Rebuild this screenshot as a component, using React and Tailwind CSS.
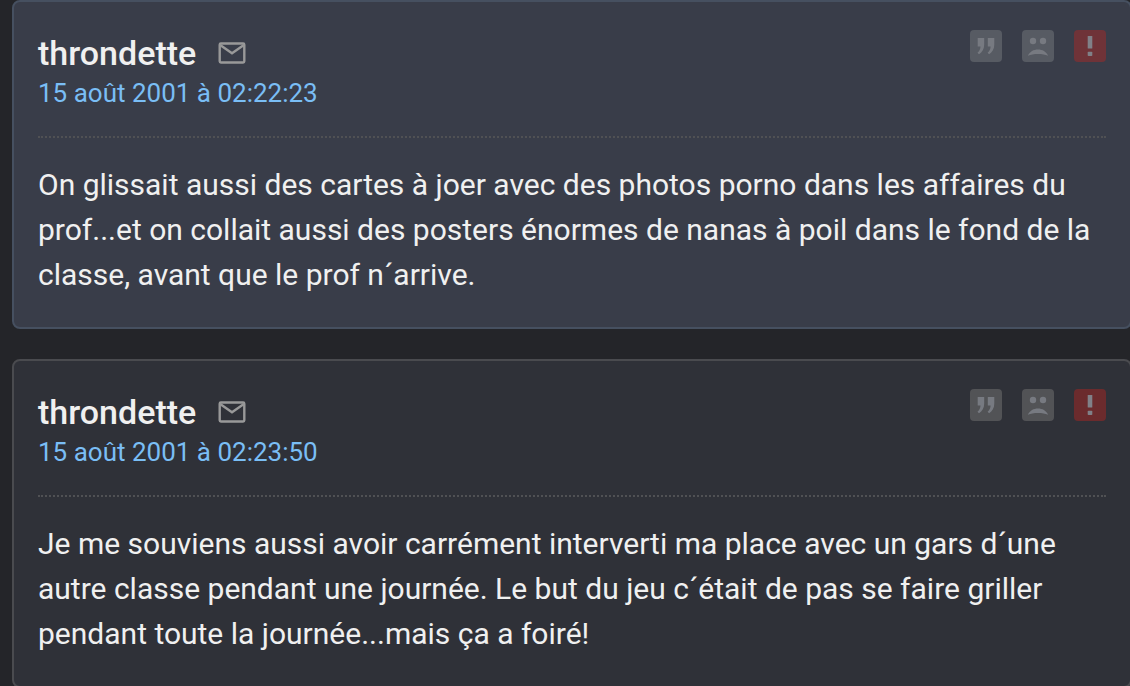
const posts = [
  {
    id: 1,
    author: "throndette",
    date: "15 août 2001 à 02:22:23",
    text: "On glissait aussi des cartes à joer avec des photos porno dans les affaires du prof...et on collait aussi des posters énormes de nanas à poil dans le fond de la classe, avant que le prof n´arrive.",
    card: "bg-[#393d49] border-[#465060]",
    grey: "bg-[#575b63]",
    red: "bg-[#6f3338]",
  },
  {
    id: 2,
    author: "throndette",
    date: "15 août 2001 à 02:23:50",
    text: "Je me souviens aussi avoir carrément interverti ma place avec un gars d´une autre classe pendant une journée. Le but du jeu c´était de pas se faire griller pendant toute la journée...mais ça a foiré!",
    card: "bg-[#2f3138] border-[#4a4b4f]",
    grey: "bg-[#525356]",
    red: "bg-[#6b2b2d]",
  },
];

const MailIcon = () => (
  <svg viewBox="0 0 28 22" className="w-7 h-[22px]" fill="none" stroke="#999999" strokeWidth="2.4">
    <rect x="1.7" y="1.5" width="24.6" height="19" rx="1.2" />
    <path d="M2.5 3.2 L14 11.2 L25.5 3.2" />
  </svg>
);

const QuoteIcon = () => (
  <svg viewBox="0 0 32 32" className="w-8 h-8" fill="#777a81">
    <path d="M7.700 8h6.500v6.500c0 4.500-2 7.800-5.200 9.700l-1.500-1.500c1.900-1.700 2.900-3.600 3-6.200H7.700z" />
    <path d="M17.800 8h6.500v6.500c0 4.500-2 7.800-5.200 9.700l-1.500-1.500c1.900-1.700 2.900-3.600 3-6.200h-2.800z" />
  </svg>
);

const SadIcon = () => (
  <svg viewBox="0 0 32 32" className="w-8 h-8" fill="#777a81">
    <circle cx="11" cy="11" r="3.200" />
    <circle cx="21" cy="11" r="3.200" />
    <path d="M5.800 25.800C8 21.600 11.500 19.600 16 19.600s8 2 10.200 6.200c-3-1.300-6.200-1.900-10.200-1.900s-7.200 .6-10.200 1.900z" />
  </svg>
);

const AlertIcon = () => (
  <svg viewBox="0 0 32 32" className="w-8 h-8" fill="#808188">
    <rect x="13.700" y="6" width="4.600" height="12.400" rx=".5" />
    <rect x="13.700" y="21.700" width="4.600" height="4.400" rx=".8" />
  </svg>
);

const Post = ({ post }) => (
  <article className={`border-2 rounded-lg px-6 pt-7 pb-[30px] ${post.card}`}>
    <header className="flex items-start justify-between pb-[26px] border-b-2 border-dotted border-[#505154]">
      <div>
        <div className="flex items-center gap-[22px]">
          <h2 className="text-[34px] leading-[46px] font-medium text-[#f0f0f0]">{post.author}</h2>
          <button type="button" aria-label="Envoyer un message">
            <MailIcon />
          </button>
        </div>
        <a href="#post" className="block text-[26px] leading-[34px] text-[#7abef5]">{post.date}</a>
      </div>
      <div className="flex gap-5">
        <button type="button" aria-label="Citer" className={`rounded ${post.grey}`}>
          <QuoteIcon />
        </button>
        <button type="button" aria-label="Ignorer" className={`rounded ${post.grey}`}>
          <SadIcon />
        </button>
        <button type="button" aria-label="Signaler" className={`rounded ${post.red}`}>
          <AlertIcon />
        </button>
      </div>
    </header>
    <p className="pt-6 text-[30px] leading-[45px] text-[#f0f0f0]">{post.text}</p>
  </article>
);

export default function App() {
  return (
    <div className="h-screen overflow-hidden bg-[#242529] font-[Roboto,sans-serif]">
      <main className="flex flex-col gap-[30px] pl-3 -mr-0.5">
        {posts.map((post) => (
          <Post key={post.id} post={post} />
        ))}
      </main>
    </div>
  );
}
